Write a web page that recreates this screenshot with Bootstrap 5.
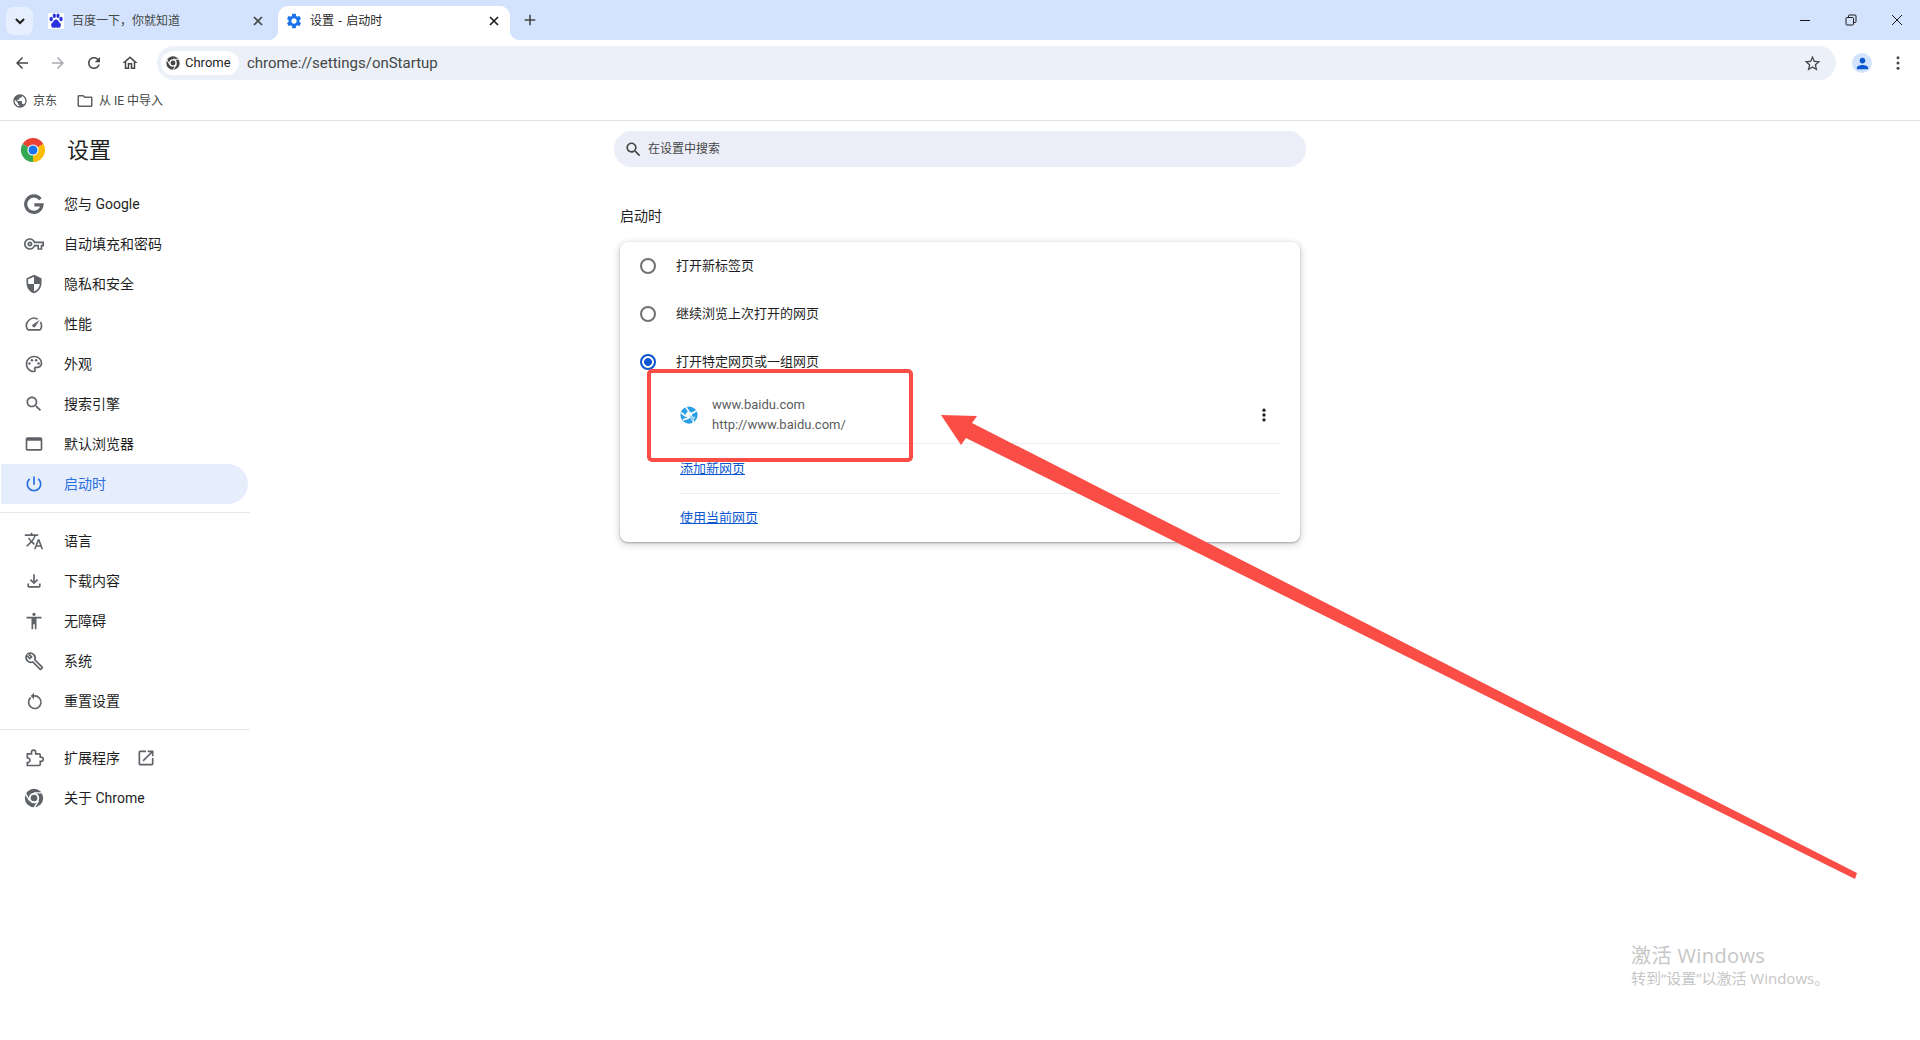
<!DOCTYPE html>
<html lang="zh-CN">
<head>
  <meta charset="UTF-8">
  <title>设置 - 启动时</title>
  <link href="https://cdn.jsdelivr.net/npm/bootstrap@5.3.0/dist/css/bootstrap.min.css" rel="stylesheet">
  <script src="https://cdn.jsdelivr.net/npm/bootstrap@5.3.0/dist/js/bootstrap.bundle.min.js"></script>
  <style>
    html, body { height: 100%; }
    body {
      font-family: Roboto, "Noto Sans CJK SC", sans-serif;
      color: #1f1f1f;
      background: #fff;
      overflow: hidden;
      position: relative;
    }
    svg { display: block; flex: none; }

    /* tab strip */
    .strip { height: 40px; background: #d3e3fd; padding-top: 6px; }
    .tab-menu { width: 27px; height: 28px; margin-left: 6px; border-radius: 8px; background: #e6effd; }
    .tab-item { width: 232px; height: 34px; font-size: 12px; color: #444746; border-radius: 10px 10px 0 0; position: relative; }
    .tab-first { margin-left: 5px; width: 240px; padding: 0 12px 4px 10px; }
    .tab-title { margin-left: 8px; flex: 1; white-space: nowrap; }
    .tab-on { background: #fff; color: #1f1f1f; padding: 0 8px 4px 7px; }
    .tab-on .tab-title { margin-left: 7px; word-spacing: 1.5px; }
    .tab-on::before, .tab-on::after { content: ""; position: absolute; bottom: 0; width: 10px; height: 10px; }
    .tab-on::before { left: -10px; background: radial-gradient(circle at 0 0, transparent 10px, #fff 10.5px); }
    .tab-on::after { right: -10px; background: radial-gradient(circle at 100% 0, transparent 10px, #fff 10.5px); }
    .tab-add { margin-left: 12px; margin-bottom: 6px; }
    .win-ctl { margin-left: auto; margin-bottom: 6px; gap: 30px; padding-right: 15px; }

    /* toolbar */
    .tool-row { height: 40px; background: #fff; padding-top: 6px; border-radius: 10px 10px 0 0; position: relative; }
    .tool-btns { width: 157px; padding-left: 13px; gap: 18px; }
    .omni { width: 1679px; height: 34px; background: #ebf0f9; border-radius: 17px; padding: 0 14px 0 4px; }
    .chip { height: 24px; width: 78px; background: #fff; border-radius: 12px; padding-left: 5px; gap: 5px; font-size: 13px; color: #1f1f1f; }
    .omni-url { margin-left: 8px; padding-top: 1px; font-size: 15px; color: #444746; flex: 1; }
    .tool-end { padding-left: 16px; gap: 17px; }
    .avatar { width: 20px; height: 20px; border-radius: 50%; background: #d3e3fd; overflow: hidden; }

    /* bookmarks */
    .marks { height: 41px; border-bottom: 1px solid #e1e1e1; font-size: 12px; color: #444746; padding-left: 12px; padding-top: 2px; }
    .mark-item { gap: 5px; margin-right: 19px; }

    /* sidebar */
    .side { width: 250px; flex: none; }
    .side-top { height: 58px; padding-left: 21px; }
    .side-name { font-size: 22px; margin-left: 22px; color: #1f1f1f; }
    .side-link { height: 40px; width: 247px; margin-left: 1px; padding: 0 0 0 23px; color: #1f1f1f; font-size: 14px; border-radius: 0 20px 20px 0; gap: 20px; }
    .side-link svg { fill: #5f6368; }
    .side-link.on { background: #e6eefc; color: #2a6fe0; }
    .side-link.on svg { fill: #2a6fe0; }
    .side-line { height: 1px; background: #e8e8e8; margin: 8px 0; }
    .side-top + .nav { margin-top: 5px; }
    .ext-go { margin-left: -4px; }

    /* main column */
    .main-col { width: 680px; margin-left: 370px; }
    .find { width: 692px; height: 36px; margin: 10px 0 0 -6px; border-radius: 18px; background: #ebeef8; padding-left: 10px; gap: 5px; font-size: 12px; color: #444746; }
    .sect-name { font-size: 14px; margin-top: 36px; height: 26px; line-height: 26px; }
    .set-box { margin-top: 13px; height: 300px; border: 0; border-radius: 8px; box-shadow: 0 1px 2px rgba(60,64,67,.4), 0 2px 6px 2px rgba(60,64,67,.16); }
    .radio-row { height: 48px; padding-left: 20px; gap: 20px; font-size: 13px; margin: 0; }
    .radio-row .form-check-input { width: 16px; height: 16px; margin: 0; border: 2px solid #6f7276; background: #fff; flex: none; }
    .radio-row .form-check-input:checked { border-color: #0b57d0; background: radial-gradient(circle, #0b57d0 0 3.6px, #fff 4.2px); }
    .page-row { height: 58px; margin: 0 20px 0 60px; border-bottom: 1px solid #ececec; position: relative; font-size: 13px; color: #5a5d60; }
    .page-txt { margin-left: 14px; line-height: 20px; }
    .page-more { margin-left: auto; margin-right: 7px; }
    .act-row { height: 49px; margin: 0 20px 0 60px; font-size: 13px; }
    .act-row + .act-row { border-top: 1px solid #ececec; }
    .act-row a { color: #0b57d0; }

    /* annotation + watermark */
    .mark-box { position: absolute; left: 647px; top: 369px; width: 266px; height: 93px; border: 4px solid #f94d46; border-radius: 5px; }
    .mark-arrow { position: absolute; left: 0; top: 0; }
    .activate { position: absolute; left: 1631px; top: 946px; color: #c6c6c6; line-height: 1; font-family: "Open Sans", "Noto Sans CJK SC", sans-serif; white-space: nowrap; }
    .activate-a { font-size: 20px; margin-bottom: 5px; letter-spacing: .4px; }
    .activate-b { font-size: 15px; }
  </style>
</head>
<body>
  <div class="strip d-flex align-items-center">
    <div class="tab-menu d-flex align-items-center justify-content-center mb-1">
      <svg width="14" height="14" viewBox="0 0 24 24" fill="none" stroke="#1f1f1f" stroke-width="3.4"><path d="M5 8.5l7 7 7-7"/></svg>
    </div>
    <div class="tab-item tab-first d-flex align-items-center">
      <svg width="16" height="16" viewBox="0 0 16 16"><rect width="16" height="16" fill="#fff"/><g fill="#2932e1"><ellipse cx="3.2" cy="6" rx="1.7" ry="2.2"/><ellipse cx="6.3" cy="2.8" rx="1.6" ry="2.2"/><ellipse cx="10" cy="2.8" rx="1.6" ry="2.2"/><ellipse cx="13" cy="6" rx="1.7" ry="2.2"/><path d="M8 6.5c2 0 2.500 2.200 4 3.500 1.500 1.300 1 4.800-1.500 4.800-1 0-1.600-.4-2.500-.4s-1.500.4-2.500.4C3 14.800 2.500 11.300 4 10c1.500-1.300 2-3.500 4-3.500z"/></g></svg>
      <span class="tab-title">百度一下，你就知道</span>
      <svg width="16" height="16" viewBox="0 0 24 24" fill="none" stroke="#444746" stroke-width="2.600"><path d="M6 6l12 12M18 6L6 18"/></svg>
    </div>
    <div class="tab-item tab-on d-flex align-items-center">
      <svg width="18" height="18" viewBox="0 0 24 24" fill="#1a73e8"><path d="M19.140 12.940c.04-.3.06-.61.06-.94 0-.32-.02-.64-.07-.94l2.030-1.580c.18-.14.23-.41.12-.61l-1.920-3.320c-.12-.22-.37-.29-.59-.22l-2.390.96c-.5-.38-1.030-.7-1.620-.94l-.36-2.540c-.04-.24-.24-.41-.48-.41h-3.840c-.24 0-.43.17-.47.41l-.36 2.540c-.59.24-1.130.57-1.620.94l-2.390-.96c-.22-.08-.47 0-.59.22L2.740 8.870c-.12.21-.08.47.12.61l2.030 1.580c-.05.3-.09.63-.09.94s.02.64.07.94l-2.030 1.580c-.18.14-.23.41-.12.61l1.920 3.320c.12.22.37.29.59.22l2.390-.96c.5.38 1.030.7 1.620.94l.36 2.540c.05.24.24.41.48.41h3.840c.24 0 .44-.17.47-.41l.36-2.540c.59-.24 1.130-.56 1.620-.94l2.390.96c.22.08.47 0 .59-.22l1.920-3.320c.12-.22.07-.47-.12-.61l-2.010-1.580zM12 15.600c-1.980 0-3.600-1.620-3.600-3.600s1.620-3.600 3.600-3.600 3.600 1.620 3.600 3.600-1.620 3.600-3.600 3.600z"/></svg>
      <span class="tab-title">设置 - 启动时</span>
      <svg width="16" height="16" viewBox="0 0 24 24" fill="none" stroke="#1f1f1f" stroke-width="2.600"><path d="M6 6l12 12M18 6L6 18"/></svg>
    </div>
    <svg class="tab-add" width="16" height="16" viewBox="0 0 24 24" fill="none" stroke="#444746" stroke-width="2.400"><path d="M12 4v16M4 12h16"/></svg>
    <div class="win-ctl d-flex align-items-center">
      <svg width="16" height="16" viewBox="0 0 16 16" fill="none" stroke="#1a1a1a"><path d="M3 8.500h10"/></svg>
      <svg width="16" height="16" viewBox="0 0 16 16" fill="none" stroke="#1a1a1a"><rect x="3" y="5.500" width="7.500" height="7.500" rx="1"/><path d="M5.500 5.500V4a1 1 0 0 1 1-1H12a1 1 0 0 1 1 1v5.500a1 1 0 0 1-1 1h-1.500"/></svg>
      <svg width="16" height="16" viewBox="0 0 16 16" fill="none" stroke="#1a1a1a"><path d="M3 3l10 10M13 3L3 13"/></svg>
    </div>
  </div>

  <div class="tool-row d-flex align-items-center">
    <div class="tool-btns d-flex align-items-center">
      <svg width="18" height="18" viewBox="0 0 24 24" fill="#474747"><path d="M20 11H7.830l5.590-5.590L12 4l-8 8 8 8 1.410-1.410L7.830 13H20v-2z"/></svg>
      <svg width="18" height="18" viewBox="0 0 24 24" fill="#a8abaf"><path d="M12 4l-1.410 1.410L16.170 11H4v2h12.170l-5.580 5.590L12 20l8-8z"/></svg>
      <svg width="18" height="18" viewBox="0 0 24 24" fill="#474747"><path d="M17.650 6.350C16.200 4.900 14.210 4 12 4c-4.420 0-7.990 3.580-7.990 8s3.570 8 7.990 8c3.730 0 6.840-2.550 7.730-6h-2.080c-.82 2.330-3.040 4-5.650 4-3.310 0-6-2.690-6-6s2.690-6 6-6c1.660 0 3.140.69 4.220 1.780L13 11h7V4l-2.350 2.350z"/></svg>
      <svg width="18" height="18" viewBox="0 0 24 24" fill="#474747"><path d="M12 5.690l5 4.500V18h-2v-6H9v6H7v-7.810l5-4.500M12 3L2 12h3v8h6v-6h2v6h6v-8h3L12 3z"/></svg>
    </div>
    <div class="omni d-flex align-items-center">
      <div class="chip d-flex align-items-center">
        <svg width="14" height="14" viewBox="0 0 24 24"><circle cx="12" cy="12" r="11.500" fill="#444746"/><circle cx="12" cy="12" r="6.500" fill="#fff"/><circle cx="12" cy="12" r="4.200" fill="#444746"/><path d="M12 5.600h10M6.500 15.200L1.500 6.500M17.500 15.200l-5 8.300" stroke="#fff" stroke-width="1.700"/></svg>
        <span>Chrome</span>
      </div>
      <span class="omni-url">chrome://settings/onStartup</span>
      <svg width="19" height="19" viewBox="0 0 24 24" fill="#474747"><path d="M22 9.240l-7.190-.62L12 2 9.190 8.630 2 9.240l5.460 4.730L5.820 21 12 17.270 18.180 21l-1.630-7.030L22 9.240zM12 15.400l-3.760 2.270 1-4.280-3.320-2.880 4.380-.38L12 6.100l1.710 4.040 4.380.38-3.320 2.880 1 4.280L12 15.400z"/></svg>
    </div>
    <div class="tool-end d-flex align-items-center">
      <div class="avatar d-flex align-items-center justify-content-center">
        <svg width="17" height="17" viewBox="0 0 24 24" fill="#0b57d0"><path d="M12 12c2.210 0 4-1.790 4-4s-1.790-4-4-4-4 1.790-4 4 1.790 4 4 4zm0 2c-2.670 0-8 1.340-8 4v2h16v-2c0-2.660-5.330-4-8-4z"/></svg>
      </div>
      <svg width="18" height="18" viewBox="0 0 24 24" fill="#474747"><circle cx="12" cy="5" r="2"/><circle cx="12" cy="12" r="2"/><circle cx="12" cy="19" r="2"/></svg>
    </div>
  </div>

  <div class="marks d-flex align-items-center">
    <div class="mark-item d-flex align-items-center">
      <svg width="16" height="16" viewBox="0 0 24 24" fill="#5f6368"><path d="M12 2C6.480 2 2 6.480 2 12s4.480 10 10 10 10-4.480 10-10S17.520 2 12 2zm-1 17.930c-3.950-.49-7-3.850-7-7.930 0-.62.08-1.210.21-1.790L9 15v1c0 1.100.9 2 2 2v1.930zm6.900-2.540c-.26-.81-1-1.390-1.900-1.390h-1v-3c0-.55-.45-1-1-1H8v-2h2c.55 0 1-.45 1-1V7h2c1.100 0 2-.9 2-2v-.41c2.930 1.190 5 4.060 5 7.410 0 2.080-.8 3.970-2.100 5.390z"/></svg>
      <span>京东</span>
    </div>
    <div class="mark-item d-flex align-items-center">
      <svg width="18" height="18" viewBox="0 0 24 24" fill="#5f6368"><path d="M9.170 6l2 2H20v10H4V6h5.170M10 4H4c-1.100 0-1.990.9-1.990 2L2 18c0 1.100.9 2 2 2h16c1.100 0 2-.9 2-2V8c0-1.100-.9-2-2-2h-8l-2-2z"/></svg>
      <span>从 IE 中导入</span>
    </div>
  </div>

  <div class="d-flex">
    <aside class="side">
      <div class="side-top d-flex align-items-center">
        <svg width="24" height="24" viewBox="0 0 24 24"><path d="M12 12L1.600 6A12 12 0 0 1 22.400 6z" fill="#ea4335"/><path d="M12 12L1.600 6A12 12 0 0 0 12 24z" fill="#34a853"/><path d="M12 12L22.400 6A12 12 0 0 1 12 24z" fill="#fbbc04"/><circle cx="12" cy="12" r="5.600" fill="#fff"/><circle cx="12" cy="12" r="4.500" fill="#1a73e8"/></svg>
        <span class="side-name">设置</span>
      </div>
      <nav class="nav flex-column">
        <a class="nav-link side-link d-flex align-items-center" href="#"><svg width="20" height="20" viewBox="0 0 24 24"><path d="M19.700 6.300A9.800 9.800 0 1 0 21.600 13H12.500" fill="none" stroke="#5f6368" stroke-width="3.800"/></svg>您与 Google</a>
        <a class="nav-link side-link d-flex align-items-center" href="#"><svg width="20" height="20" viewBox="0 0 24 24"><path d="M22 19h-6v-4h-2.680c-1.140 2.420-3.600 4-6.320 4-3.860 0-7-3.140-7-7s3.140-7 7-7c2.720 0 5.170 1.580 6.320 4H24v6h-2v4zm-4-2h2v-4h2v-2H11.940l-.23-.67C11.010 8.340 9.110 7 7 7c-2.760 0-5 2.240-5 5s2.240 5 5 5c2.110 0 4.010-1.340 4.710-3.330l.23-.67H18v4zM7 15c-1.650 0-3-1.350-3-3s1.350-3 3-3 3 1.350 3 3-1.350 3-3 3zm0-4c-.55 0-1 .45-1 1s.45 1 1 1 1-.45 1-1-.45-1-1-1z"/></svg>自动填充和密码</a>
        <a class="nav-link side-link d-flex align-items-center" href="#"><svg width="20" height="20" viewBox="0 0 24 24"><path d="M12 1L3 5v6c0 5.550 3.840 10.740 9 12 5.160-1.260 9-6.450 9-12V5l-9-4zm0 10.990h7c-.53 4.120-3.280 7.790-7 8.940V12H5V6.300l7-3.110v8.800z"/></svg>隐私和安全</a>
        <a class="nav-link side-link d-flex align-items-center" href="#"><svg width="20" height="20" viewBox="0 0 24 24"><path d="M20.380 8.570l-1.230 1.850a8 8 0 0 1-.22 7.580H5.070A8 8 0 0 1 15.580 6.850l1.850-1.230A10 10 0 0 0 3.350 19a2 2 0 0 0 1.720 1h13.850a2 2 0 0 0 1.740-1 10 10 0 0 0-.27-10.440zm-9.790 6.840a2 2 0 0 0 2.830 0l5.660-8.490-8.490 5.660a2 2 0 0 0 0 2.830z"/></svg>性能</a>
        <a class="nav-link side-link d-flex align-items-center" href="#"><svg width="20" height="20" viewBox="0 0 24 24"><path d="M12 22C6.490 22 2 17.510 2 12S6.490 2 12 2s10 4.040 10 9c0 3.310-2.690 6-6 6h-1.770c-.28 0-.5.22-.5.5 0 .12.05.23.13.33.41.47.64 1.060.64 1.670A2.500 2.500 0 0 1 12 22zm0-18c-4.410 0-8 3.590-8 8s3.590 8 8 8c.28 0 .5-.22.5-.5a.54.54 0 0 0-.14-.35c-.41-.46-.63-1.050-.63-1.650a2.500 2.500 0 0 1 2.500-2.500H16c2.210 0 4-1.790 4-4 0-3.860-3.590-7-8-7z"/><circle cx="6.500" cy="11.500" r="1.500"/><circle cx="9.500" cy="7.500" r="1.500"/><circle cx="14.500" cy="7.500" r="1.500"/><circle cx="17.500" cy="11.500" r="1.500"/></svg>外观</a>
        <a class="nav-link side-link d-flex align-items-center" href="#"><svg width="20" height="20" viewBox="0 0 24 24"><path d="M15.500 14h-.79l-.28-.27C15.410 12.590 16 11.110 16 9.500 16 5.910 13.090 3 9.500 3S3 5.910 3 9.500 5.910 16 9.500 16c1.610 0 3.090-.59 4.230-1.570l.27.28v.79l5 4.990L20.490 19l-4.990-5zm-6 0C7.010 14 5 11.990 5 9.500S7.010 5 9.500 5 14 7.010 14 9.500 11.990 14 9.500 14z"/></svg>搜索引擎</a>
        <a class="nav-link side-link d-flex align-items-center" href="#"><svg width="20" height="20" viewBox="0 0 24 24"><path d="M20 4H4c-1.100 0-2 .9-2 2v12c0 1.100.9 2 2 2h16c1.100 0 2-.9 2-2V6c0-1.100-.9-2-2-2zm0 14H4V8h16v10z"/></svg>默认浏览器</a>
        <a class="nav-link side-link on d-flex align-items-center" href="#"><svg width="20" height="20" viewBox="0 0 24 24"><path d="M13 3h-2v10h2V3zm4.830 2.170l-1.420 1.420C17.990 7.860 19 9.810 19 12c0 3.870-3.130 7-7 7s-7-3.130-7-7c0-2.190 1.010-4.140 2.580-5.420L6.170 5.170C4.230 6.820 3 9.260 3 12c0 4.970 4.030 9 9 9s9-4.030 9-9c0-2.740-1.230-5.180-3.170-6.830z"/></svg>启动时</a>
        <div class="side-line"></div>
        <a class="nav-link side-link d-flex align-items-center" href="#"><svg width="20" height="20" viewBox="0 0 24 24"><path d="M12.870 15.070l-2.540-2.510.03-.03c1.740-1.940 2.980-4.170 3.710-6.530H17V4h-7V2H8v2H1v1.990h11.170C11.500 7.920 10.440 9.750 9 11.350 8.070 10.320 7.300 9.190 6.690 8h-2c.73 1.630 1.730 3.170 2.980 4.560l-5.090 5.020L4 19l5-5 3.110 3.110.76-2.040zM18.500 10h-2L12 22h2l1.120-3h4.750L21 22h2l-4.500-12zm-2.620 7l1.620-4.330L19.120 17h-3.240z"/></svg>语言</a>
        <a class="nav-link side-link d-flex align-items-center" href="#"><svg width="20" height="20" viewBox="0 0 24 24"><path d="M18 15v3H6v-3H4v3c0 1.100.9 2 2 2h12c1.100 0 2-.9 2-2v-3h-2zm-1-4l-1.410-1.410L13 12.170V4h-2v8.170L8.410 9.590 7 11l5 5 5-5z"/></svg>下载内容</a>
        <a class="nav-link side-link d-flex align-items-center" href="#"><svg width="20" height="20" viewBox="0 0 24 24"><path d="M12 2c1.100 0 2 .9 2 2s-.9 2-2 2-2-.9-2-2 .9-2 2-2zm9 7h-6v13h-2v-6h-2v6H9V9H3V7h18v2z"/></svg>无障碍</a>
        <a class="nav-link side-link d-flex align-items-center" href="#"><svg width="20" height="20" viewBox="0 0 24 24"><path d="M21.700 19.300l-8.700-8.700c.8-2.100.4-4.600-1.300-6.300-1.800-1.800-4.500-2.200-6.700-1.200L9 7 7 9 3 5.100C2 7.300 2.400 10 4.200 11.800c1.700 1.700 4.200 2.100 6.300 1.300l8.700 8.700c.3.300.8.300 1.100 0l1.400-1.400c.3-.3.300-.8 0-1.100z" fill="none" stroke="#5f6368" stroke-width="2"/></svg>系统</a>
        <a class="nav-link side-link d-flex align-items-center" href="#"><svg width="20" height="20" viewBox="0 0 24 24"><path d="M8 7.800A7.500 7.500 0 1 0 12 6" fill="none" stroke="#5f6368" stroke-width="2"/><path d="M12 2.200v7.600L8 6z"/></svg>重置设置</a>
        <div class="side-line"></div>
        <a class="nav-link side-link d-flex align-items-center" href="#"><svg width="20" height="20" viewBox="0 0 24 24"><path d="M4 7h5V5a2.500 2.500 0 0 1 5 0v2h4a1.500 1.500 0 0 1 1.500 1.500V11h1a2.500 2.500 0 0 1 0 5h-1v3.500A1.500 1.500 0 0 1 18 21H4v-3.500h1a2.800 2.800 0 0 0 0-5.500H4z" fill="none" stroke="#5f6368" stroke-width="2"/></svg><span>扩展程序</span><svg class="ext-go" width="20" height="20" viewBox="0 0 24 24"><path d="M19 19H5V5h7V3H5c-1.110 0-2 .9-2 2v14c0 1.100.89 2 2 2h14c1.100 0 2-.9 2-2v-7h-2v7zM14 3v2h3.590l-9.830 9.830 1.410 1.410L19 6.410V10h2V3h-7z"/></svg></a>
        <a class="nav-link side-link d-flex align-items-center" href="#"><svg width="20" height="20" viewBox="0 0 24 24"><circle cx="12" cy="12" r="11" fill="#5f6368"/><circle cx="12" cy="12" r="6.200" fill="#fff"/><circle cx="12" cy="12" r="4" fill="#5f6368"/><path d="M12 5.800h10M6.600 15.200L1.600 6.500M17.400 15.200l-5 8.300" stroke="#fff" stroke-width="1.600"/></svg>关于 Chrome</a>
      </nav>
    </aside>

    <main class="main-col">
      <div class="find d-flex align-items-center">
        <svg width="19" height="19" viewBox="0 0 24 24" fill="#444746"><path d="M15.500 14h-.79l-.28-.27C15.410 12.590 16 11.110 16 9.500 16 5.910 13.090 3 9.500 3S3 5.910 3 9.500 5.910 16 9.500 16c1.610 0 3.090-.59 4.230-1.570l.27.28v.79l5 4.990L20.490 19l-4.990-5zm-6 0C7.010 14 5 11.990 5 9.500S7.010 5 9.500 5 14 7.010 14 9.500 11.990 14 9.500 14z"/></svg>
        <span>在设置中搜索</span>
      </div>
      <div class="sect-name">启动时</div>
      <div class="card set-box">
        <label class="radio-row d-flex align-items-center"><input class="form-check-input" type="radio" name="startup"><span>打开新标签页</span></label>
        <label class="radio-row d-flex align-items-center"><input class="form-check-input" type="radio" name="startup"><span>继续浏览上次打开的网页</span></label>
        <label class="radio-row d-flex align-items-center"><input class="form-check-input" type="radio" name="startup" checked><span>打开特定网页或一组网页</span></label>
        <div class="page-row d-flex align-items-center">
          <svg width="18" height="18" viewBox="0 0 24 24"><circle cx="12" cy="12" r="11.500" fill="#2b9fe6"/><path d="M12 8L8 1.500M15.500 10L22 6.500M15.500 14L18 22M12 16l-8 2.500M8.500 14L1.500 9" stroke="#fff" stroke-width="2.200" fill="none"/><circle cx="12" cy="12" r="4.200" fill="#fff"/><path d="M12 12l9 3-5 6z" fill="#9fd4f5"/></svg>
          <div class="page-txt">
            <div>www.baidu.com</div>
            <div>http://www.baidu.com/</div>
          </div>
          <svg class="page-more" width="18" height="18" viewBox="0 0 24 24" fill="#1f1f1f"><circle cx="12" cy="5.500" r="2.200"/><circle cx="12" cy="12" r="2.200"/><circle cx="12" cy="18.500" r="2.200"/></svg>
        </div>
        <div class="act-row d-flex align-items-center"><a href="#">添加新网页</a></div>
        <div class="act-row d-flex align-items-center"><a href="#">使用当前网页</a></div>
      </div>
    </main>
  </div>

  <!-- annotation drawn over the page -->
  <div class="mark-box"></div>
  <svg class="mark-arrow" width="1920" height="1040" viewBox="0 0 1920 1040"><polygon points="941,415 977,416 972,423 1857,873 1855,879 966,438 961,445" fill="#f94d46"/></svg>

  <div class="activate">
    <div class="activate-a">激活 Windows</div>
    <div class="activate-b">转到“设置”以激活 Windows。</div>
  </div>
</body>
</html>
